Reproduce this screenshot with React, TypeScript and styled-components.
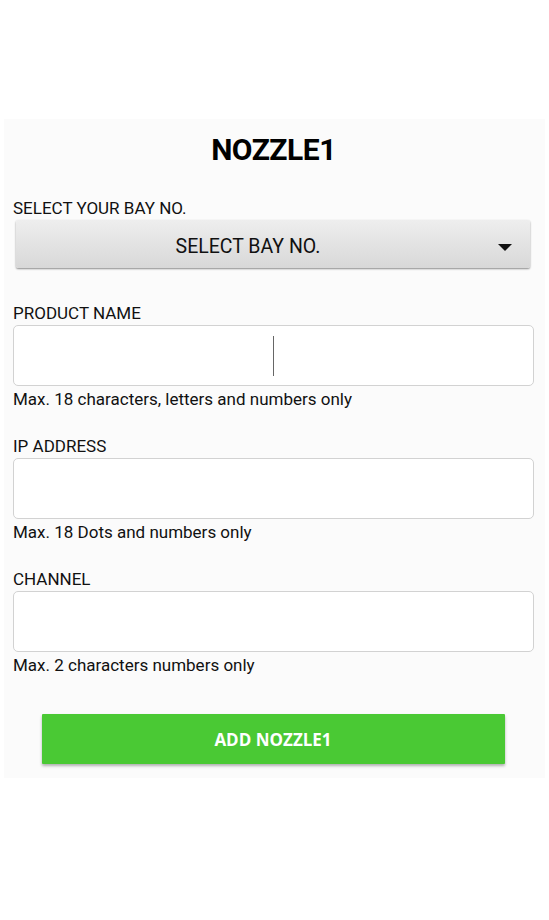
import React from "react";
import styled, { createGlobalStyle } from "styled-components";

const Global = createGlobalStyle`
  body {
    margin: 0;
    background: #ffffff;
    font-family: Roboto, "Liberation Sans", sans-serif;
    color: #111;
  }
`;

const Page = styled.div`
  padding: 119px 4px 0 4px;
`;

const Card = styled.div`
  background: #fbfbfb;
  padding: 12px 11px 14px 9px;
  display: flex;
  flex-direction: column;
`;

const Title = styled.h1`
  margin: 0;
  text-align: center;
  font-size: 30px;
  letter-spacing: -0.5px;
  font-weight: 700;
  line-height: 38px;
  color: #000;
`;

const Field = styled.div`
  display: flex;
  flex-direction: column;
  margin-top: ${(p: { top: number }) => p.top}px;
`;

const Label = styled.label`
  font-size: 17px;
  line-height: 20px;
  color: #111;
`;

const Select = styled.div`
  margin: 2px 4px 0 3px;
  padding: 4px 50px 0 0;
  box-sizing: border-box;
  height: 48px;
  position: relative;
  display: flex;
  align-items: center;
  justify-content: center;
  background: linear-gradient(#eeeeee, #d8d8d8);
  border-radius: 2px;
  box-shadow: 0 1px 2px rgba(0, 0, 0, 0.45);
  font-size: 19.5px;
  color: #111;
`;

const Caret = styled.span`
  position: absolute;
  right: 18px;
  top: 24px;
  width: 0;
  height: 0;
  border-left: 7px solid transparent;
  border-right: 7px solid transparent;
  border-top: 7px solid #111;
`;

const Input = styled.div`
  margin-top: 2px;
  height: 59px;
  background: #fff;
  border: 1px solid #d2d2d2;
  border-radius: 5px;
  display: flex;
  align-items: center;
  justify-content: center;
`;

const Cursor = styled.span`
  width: 1px;
  height: 40px;
  background: #666;
`;

const Hint = styled.div`
  margin-top: 3px;
  font-size: 17px;
  line-height: 20px;
  color: #111;
`;

const ButtonRow = styled.div`
  display: flex;
  justify-content: center;
  margin-top: 39px;
  padding-right: 1px;
`;

const AddButton = styled.button`
  width: 463px;
  height: 50px;
  border: none;
  border-radius: 1px;
  background: #4ac934;
  color: #fff;
  font-family: "Open Sans", "Liberation Sans", sans-serif;
  font-weight: 700;
  font-size: 17px;
  box-shadow: 0 2px 3px rgba(0, 0, 0, 0.3);
`;

const fields = [
  { label: "PRODUCT NAME", hint: "Max. 18 characters, letters and numbers only", cursor: true },
  { label: "IP ADDRESS", hint: "Max. 18 Dots and numbers only" },
  { label: "CHANNEL", hint: "Max. 2 characters numbers only" },
];

export default function App() {
  return (
    <Page>
      <Global />
      <Card>
        <Title>NOZZLE1</Title>
        <Field top={29}>
          <Label>SELECT YOUR BAY NO.</Label>
          <Select>
            SELECT BAY NO.
            <Caret />
          </Select>
        </Field>
        {fields.map((f, i) => (
          <Field key={f.label} top={i === 0 ? 35 : 27}>
            <Label>{f.label}</Label>
            <Input>{f.cursor ? <Cursor /> : null}</Input>
            <Hint>{f.hint}</Hint>
          </Field>
        ))}
        <ButtonRow>
          <AddButton>ADD NOZZLE1</AddButton>
        </ButtonRow>
      </Card>
    </Page>
  );
}
